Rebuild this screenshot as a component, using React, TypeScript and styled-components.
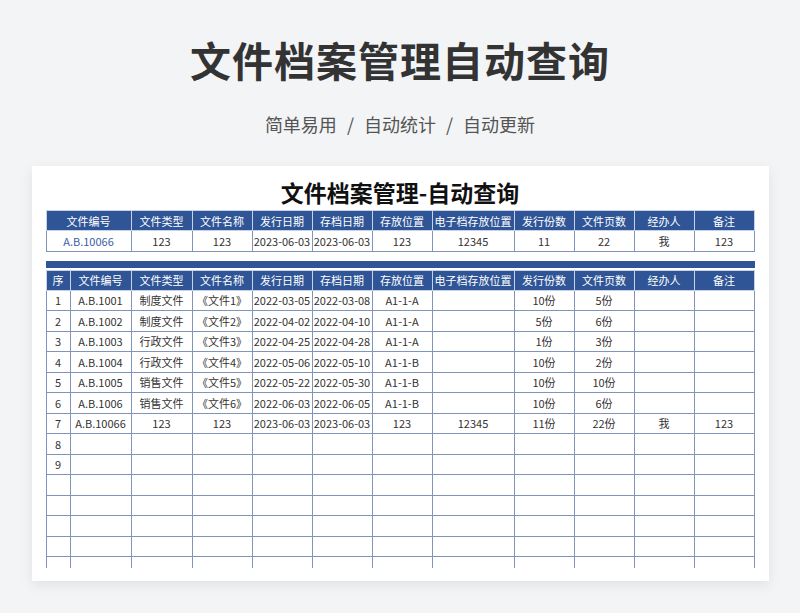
import React from 'react';
import styled, { createGlobalStyle } from 'styled-components';

const GlobalStyle = createGlobalStyle`
  html, body { margin: 0; padding: 0; background: #f2f4f6; }
  body { font-family: "Noto Sans CJK SC", "Liberation Sans", sans-serif; }
`;

const Page = styled.div`
  width: 800px;
  height: 613px;
  display: flex;
  flex-direction: column;
  align-items: center;
  overflow: hidden;
`;

const Heading = styled.h1`
  margin: 29px 0 0;
  height: 60px;
  line-height: 60px;
  font-size: 41px;
  font-weight: 700;
  color: #333;
  letter-spacing: 1px;
`;

const Sub = styled.div`
  margin-top: 20px;
  height: 30px;
  line-height: 30px;
  font-size: 18px;
  color: #555;
  word-spacing: 6px;
`;

const Card = styled.div`
  margin-top: 27px;
  width: 737px;
  height: 415px;
  background: #fff;
  box-shadow: 0 4px 12px rgba(0, 0, 0, 0.08);
  padding: 8px 0 0 14px;
  box-sizing: border-box;
  display: flex;
  flex-direction: column;
`;

const SheetTitle = styled.div`
  width: 709px;
  text-align: center;
  font-size: 23px;
  font-weight: 700;
  color: #111;
  height: 36px;
  line-height: 36px;
`;

const Table = styled.table`
  border-collapse: collapse;
  table-layout: fixed;
  width: 709px;
  font-size: 11px;
  color: #333;
`;

const Th = styled.th`
  background: #2f5597;
  color: #fff;
  font-weight: 400;
  height: 19px;
  padding: 0;
  border: 1px solid #c8d2e6;
  white-space: nowrap;
`;

const Td = styled.td<{ $blue?: boolean }>`
  height: 19.5px;
  padding: 0;
  text-align: center;
  border: 1px solid #8094bc;
  white-space: nowrap;
  overflow: hidden;
  color: ${(p) => (p.$blue ? '#3b5ea5' : '#333')};
`;

const Bar = styled.div`
  width: 709px;
  height: 7px;
  background: #2f5597;
  margin: 9px 0 2px;
`;

const Clip = styled.div`
  height: 298px;
  overflow: hidden;
`;

const widths = [24, 61, 61, 60, 60, 60, 60, 82, 60, 60, 60, 60];
const heads = ['序', '文件编号', '文件类型', '文件名称', '发行日期', '存档日期', '存放位置', '电子档存放位置', '发行份数', '文件页数', '经办人', '备注'];

const rows: string[][] = [
  ['1', 'A.B.1001', '制度文件', '《文件1》', '2022-03-05', '2022-03-08', 'A1-1-A', '', '10份', '5份', '', ''],
  ['2', 'A.B.1002', '制度文件', '《文件2》', '2022-04-02', '2022-04-10', 'A1-1-A', '', '5份', '6份', '', ''],
  ['3', 'A.B.1003', '行政文件', '《文件3》', '2022-04-25', '2022-04-28', 'A1-1-A', '', '1份', '3份', '', ''],
  ['4', 'A.B.1004', '行政文件', '《文件4》', '2022-05-06', '2022-05-10', 'A1-1-B', '', '10份', '2份', '', ''],
  ['5', 'A.B.1005', '销售文件', '《文件5》', '2022-05-22', '2022-05-30', 'A1-1-B', '', '10份', '10份', '', ''],
  ['6', 'A.B.1006', '销售文件', '《文件6》', '2022-06-03', '2022-06-05', 'A1-1-B', '', '10份', '6份', '', ''],
  ['7', 'A.B.10066', '123', '123', '2023-06-03', '2023-06-03', '123', '12345', '11份', '22份', '我', '123'],
  ['8'], ['9'], [], [], [], [], [],
];

export default function App() {
  return (
    <Page>
      <GlobalStyle />
      <Heading>文件档案管理自动查询</Heading>
      <Sub>简单易用 / 自动统计 / 自动更新</Sub>
      <Card>
        <SheetTitle>文件档案管理-自动查询</SheetTitle>
        <Table>
          <colgroup>
            <col style={{ width: 85 }} />
            {widths.slice(2).map((w, i) => <col key={i} style={{ width: w }} />)}
          </colgroup>
          <thead>
            <tr>{heads.slice(1).map((h) => <Th key={h}>{h}</Th>)}</tr>
          </thead>
          <tbody>
            <tr>
              {['A.B.10066', '123', '123', '2023-06-03', '2023-06-03', '123', '12345', '11', '22', '我', '123'].map((c, i) => (
                <Td key={i} $blue={i === 0}>{c}</Td>
              ))}
            </tr>
          </tbody>
        </Table>
        <Bar />
        <Clip>
          <Table>
            <colgroup>{widths.map((w, i) => <col key={i} style={{ width: w }} />)}</colgroup>
            <thead>
              <tr>{heads.map((h) => <Th key={h}>{h}</Th>)}</tr>
            </thead>
            <tbody>
              {rows.map((r, ri) => (
                <tr key={ri}>
                  {widths.map((_, ci) => <Td key={ci}>{r[ci] ?? ''}</Td>)}
                </tr>
              ))}
            </tbody>
          </Table>
        </Clip>
      </Card>
    </Page>
  );
}
